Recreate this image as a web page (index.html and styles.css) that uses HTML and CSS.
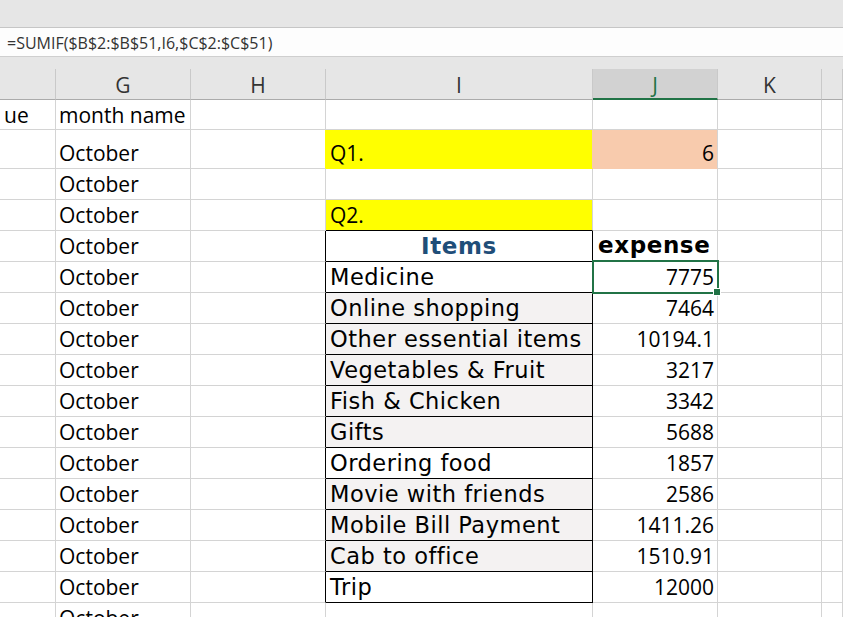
FILE: index.html
```html
<!DOCTYPE html>
<html>
<head>
<meta charset="utf-8">
<link rel="stylesheet" href="styles.css">
</head>
<body>
<div class="topbar"></div>
<div class="formula">=SUMIF($B$2:$B$51,I6,$C$2:$C$51)</div>
<div class="spacer"></div>
<div class="sheet">
  <div class="c h"></div><div class="c h">G</div><div class="c h">H</div><div class="c h">I</div><div class="c h act">J</div><div class="c h">K</div><div class="c h"></div>

  <div class="c r1 lft">ue</div><div class="c r1 g">month name</div><div class="c r1"></div><div class="c r1"></div><div class="c r1"></div><div class="c r1"></div><div class="c r1"></div>

  <div class="c"></div><div class="c g">October</div><div class="c yl"></div><div class="c yel q1 ii">Q1.</div><div class="c pch numq">6</div><div class="c"></div><div class="c"></div>

  <div class="c"></div><div class="c g">October</div><div class="c"></div><div class="c"></div><div class="c"></div><div class="c"></div><div class="c"></div>

  <div class="c"></div><div class="c g">October</div><div class="c"></div><div class="c yel q2 ii">Q2.</div><div class="c"></div><div class="c"></div><div class="c"></div>

  <div class="c"></div><div class="c g">October</div><div class="c bl"></div><div class="c tb ith">Items</div><div class="c exp">expense</div><div class="c"></div><div class="c"></div>

  <div class="c"></div><div class="c g">October</div><div class="c bl"></div><div class="c tb it">Medicine</div><div class="c num sel">7775</div><div class="c"></div><div class="c"></div>

  <div class="c"></div><div class="c g">October</div><div class="c bl"></div><div class="c tb it alt">Online shopping</div><div class="c num">7464</div><div class="c"></div><div class="c"></div>

  <div class="c"></div><div class="c g">October</div><div class="c bl"></div><div class="c tb it alt">Other essential items</div><div class="c num">10194.1</div><div class="c"></div><div class="c"></div>

  <div class="c"></div><div class="c g">October</div><div class="c bl"></div><div class="c tb it alt">Vegetables &amp; Fruit</div><div class="c num">3217</div><div class="c"></div><div class="c"></div>

  <div class="c"></div><div class="c g">October</div><div class="c bl"></div><div class="c tb it alt">Fish &amp; Chicken</div><div class="c num">3342</div><div class="c"></div><div class="c"></div>

  <div class="c"></div><div class="c g">October</div><div class="c bl"></div><div class="c tb it alt">Gifts</div><div class="c num">5688</div><div class="c"></div><div class="c"></div>

  <div class="c"></div><div class="c g">October</div><div class="c bl"></div><div class="c tb it">Ordering food</div><div class="c num">1857</div><div class="c"></div><div class="c"></div>

  <div class="c"></div><div class="c g">October</div><div class="c bl"></div><div class="c tb it alt">Movie with friends</div><div class="c num">2586</div><div class="c"></div><div class="c"></div>

  <div class="c"></div><div class="c g">October</div><div class="c bl"></div><div class="c tb it alt">Mobile Bill Payment</div><div class="c num">1411.26</div><div class="c"></div><div class="c"></div>

  <div class="c"></div><div class="c g">October</div><div class="c bl"></div><div class="c tb it alt">Cab to office</div><div class="c num">1510.91</div><div class="c"></div><div class="c"></div>

  <div class="c"></div><div class="c g">October</div><div class="c bl"></div><div class="c tb it">Trip</div><div class="c num">12000</div><div class="c"></div><div class="c"></div>

  <div class="c"></div><div class="c g">October</div><div class="c"></div><div class="c"></div><div class="c"></div><div class="c"></div><div class="c"></div>
</div>
</body>
</html>
```
FILE: styles.css
```css
* { box-sizing: border-box; margin: 0; padding: 0; }
html, body { margin: 0; background: #fff; }
body {
  width: 843px;
  height: 617px;
  overflow: hidden;
  font-family: "Open Sans", "Liberation Sans", sans-serif;
  color: #000;
}
.topbar {
  height: 28px;
  background: #e6e6e6;
  border-bottom: 1px solid #c6c6c6;
}
.formula {
  height: 29px;
  background: #fdfdfd;
  border-bottom: 1px solid #cfcfcf;
  padding: 7px 0 0 7px;
  font-size: 16px;
  line-height: 1;
  color: #333;
  white-space: nowrap;
}
.spacer {
  height: 12px;
  background: #e6e6e6;
}
.sheet {
  display: grid;
  grid-template-columns: 56px 135px 135px 267px 125px 104px 1fr;
  grid-template-rows: 31px 30px 39px repeat(15, 31px);
}
.c {
  border-right: 1px solid #d4d4d4;
  border-bottom: 1px solid #d4d4d4;
  display: flex;
  align-items: flex-end;
  padding: 0 4px 4px 4px;
  white-space: nowrap;
  overflow: hidden;
  font-size: 21px;
  line-height: 1;
}
.h {
  background: #e6e6e6;
  border-right-color: #c9c9c9;
  border-bottom-color: #ababab;
  justify-content: center;
  color: #333;
  font-size: 21px;
  padding-bottom: 3px;
}
.h.act {
  background: #d2d2d2;
  color: #217346;
  border-bottom: 2px solid #217346;
  padding-bottom: 2px;
}
.r1 { padding-bottom: 3px; }
.lft { padding-left: 4px; }
.g { padding-left: 3px; }
.ii { padding-left: 4px; }
.yel { background: #ffff00; }
.yl { border-right-color: #ffff00; }
.q1 { border-bottom-color: #ffff00; border-right-color: #f8cbad; }
.q2 { border-bottom-color: #000; }
.pch {
  background: #f8cbad;
  border-bottom-color: #f8cbad;
}
.numq {
  justify-content: flex-end;
  font-size: 21px;
  padding-right: 3px;
  padding-bottom: 4px;
}
.bl { border-right-color: #000; }
.tb {
  border-right-color: #000;
  border-bottom-color: #000;
}
.alt { background: #f4f2f2; }
.it {
  font-family: "DejaVu Sans", "Liberation Sans", sans-serif;
  font-size: 22.5px;
  letter-spacing: 0.5px;
  padding-left: 4px;
  padding-bottom: 4px;
}
.ith {
  font-family: "DejaVu Sans", "Liberation Sans", sans-serif;
  font-weight: bold;
  font-size: 23px;
  letter-spacing: 0.6px;
  color: #1f4e79;
  justify-content: center;
  padding-bottom: 3px;
}
.exp {
  font-family: "DejaVu Sans", "Liberation Sans", sans-serif;
  font-weight: bold;
  font-size: 23px;
  letter-spacing: 0.6px;
  padding-left: 5px;
  padding-bottom: 4px;
}
.num {
  justify-content: flex-end;
  font-size: 21px;
  padding-right: 3px;
  padding-bottom: 4px;
}
.sel {
  position: relative;
  overflow: visible;
}
.sel::after {
  content: "";
  position: absolute;
  left: -1px;
  top: -2px;
  right: -2px;
  bottom: -2px;
  border: 2px solid #217346;
  z-index: 2;
}
.sel::before {
  content: "";
  position: absolute;
  width: 6px;
  height: 6px;
  right: -3px;
  bottom: -3px;
  background: #217346;
  outline: 1px solid #fff;
  z-index: 3;
}
```
